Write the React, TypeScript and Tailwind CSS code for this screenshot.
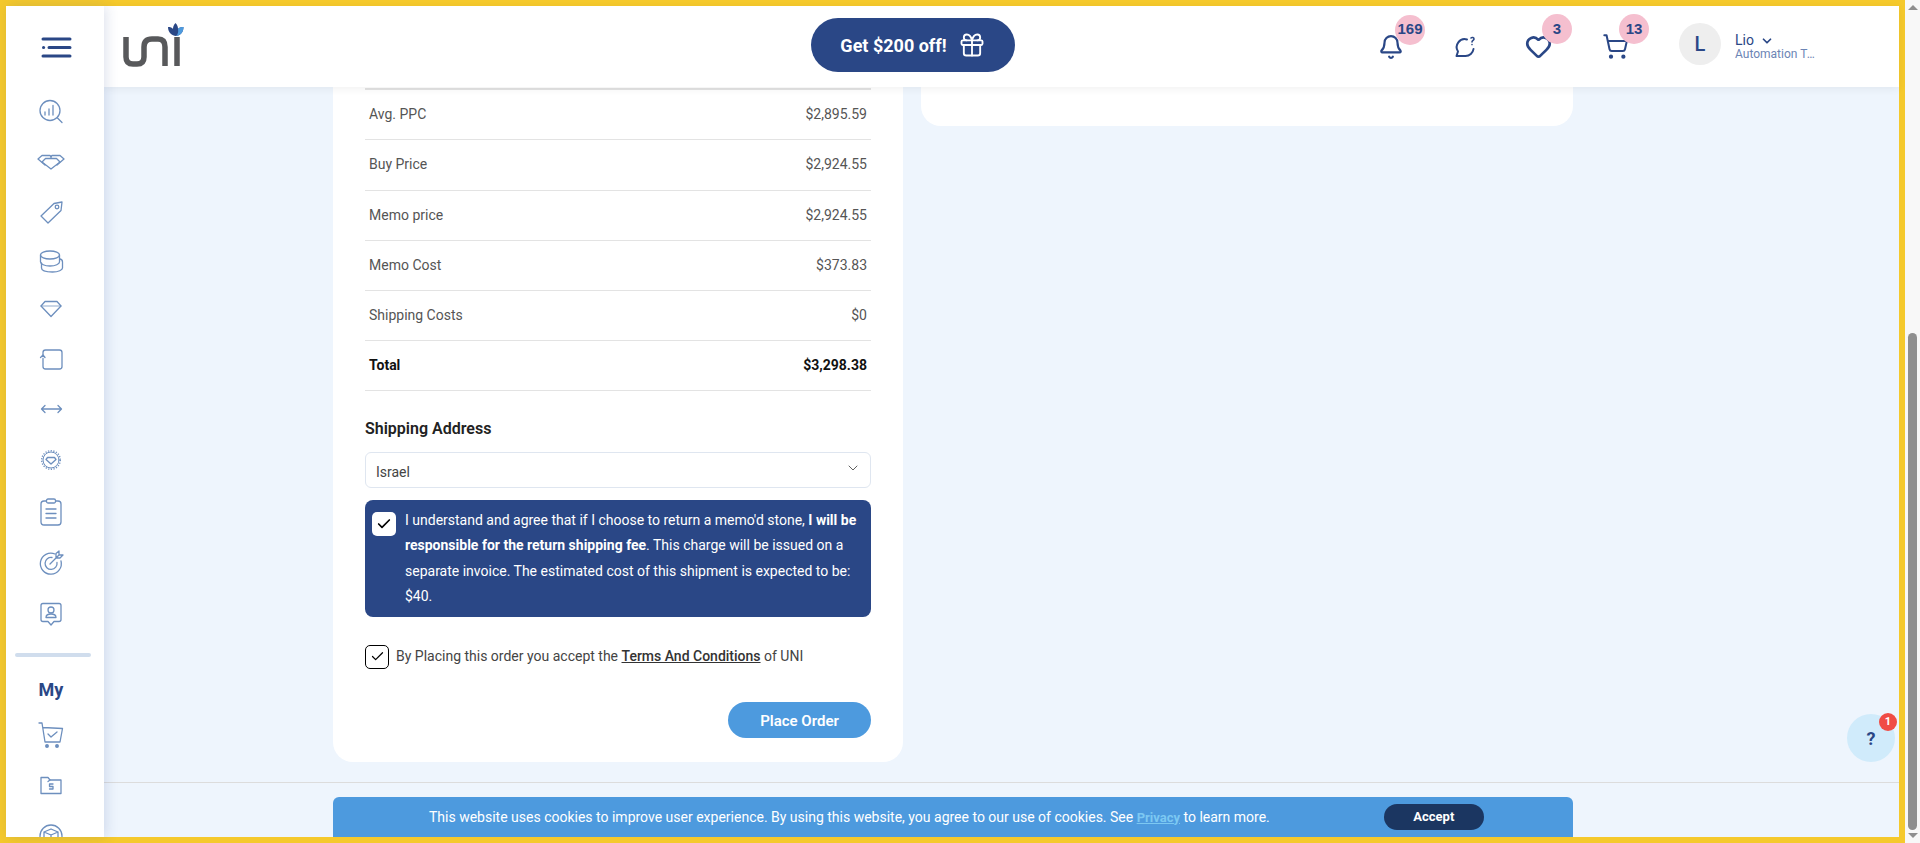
import { ReactNode } from "react";
import { Bell, ChevronDown, Gift, Heart, ShoppingCart, Check } from "lucide-react";

const rows = [
  { label: "Avg. PPC", value: "$2,895.59" },
  { label: "Buy Price", value: "$2,924.55" },
  { label: "Memo price", value: "$2,924.55" },
  { label: "Memo Cost", value: "$373.83" },
  { label: "Shipping Costs", value: "$0" },
];

// sidebar glyphs, all on a 32 box
const navIcons: ReactNode[] = [
  <>
    <circle cx="15" cy="14.500" r="10" />
    <path d="M22.500 22 27 26.500M10 19v-3M14 19v-6M18 19V9.500" />
  </>,
  <>
    <path d="M3 13 7 9.500h8l1.500 1.500M3 13l7 6" />
    <path d="M29 13l-4-3.500h-8L15.500 11M29 13l-7 6" />
    <path d="M10.500 12.500h11L25 16l-9 7-9-7z" />
  </>,
  <>
    <path d="M6 20 19 7.500 27 6l-1 8.500L13 27z" />
    <circle cx="22" cy="11" r="1.800" />
  </>,
  <>
    <ellipse cx="15" cy="9" rx="9.500" ry="4" />
    <path d="M5.500 9v7c0 2 4 4 9.500 4s9.500-2 9.500-4V9" />
    <path d="M25 13c2 .5 2.500 1.500 2.500 3v6c0 2-4 4-10 4s-11-1-11-4v-5" />
  </>,
  <g transform="translate(0,-3.500)">
    <path d="M10 9h12l4 4.500L16 24 6 13.500z" />
    <path d="M6 13.500h20" strokeOpacity="0.5" />
  </g>,
  <g transform="translate(0,-2.500)">
    <path d="M8 13V9a2.500 2.500 0 0 1 2.500-2.500h14A2.500 2.500 0 0 1 27 9v14a2.500 2.500 0 0 1-2.500 2.500h-14A2.500 2.500 0 0 1 8 23v-8" />
    <path d="m5.500 14 2.500-2.500 2 2.500" />
  </g>,
  <path transform="translate(0,-3)" d="M7 16h19M10 12.500 6.500 16l3.500 3.500M23 12.500l3.500 3.500-3.500 3.500" />,
  <g transform="translate(0,-2)">
    <circle cx="16" cy="16" r="8" strokeWidth="1" />
    <circle cx="16" cy="16" r="9.300" strokeDasharray="1.200 1.500" strokeWidth="1.400" strokeLinecap="butt" />
    <path d="M12.500 13.500h7l1.500 2-5 4.500-5-4.500z" />
  </g>,
  <>
    <rect x="6" y="5" width="20" height="24" rx="3" />
    <rect x="11.500" y="3" width="9" height="4" rx="1.500" fill="#fff" />
    <path d="M11 13h10M11 17.500h10M11 22h10" />
  </>,
  <g transform="translate(0,1)">
    <path d="M20 7a10.500 10.500 0 1 0 6 7" />
    <path d="M17 10.500a6 6 0 1 0 5 5" />
    <path d="m15 17 9-9M21 11V6.500L24 4v4h4l-3 3z" />
  </g>,
  <g transform="translate(0,2)">
    <path d="M8 5.500h16a2 2 0 0 1 2 2v14a2 2 0 0 1-2 2h-5L16 27l-3-3.500H8a2 2 0 0 1-2-2v-14a2 2 0 0 1 2-2z" />
    <circle cx="16" cy="12" r="3" />
    <path d="M11 19.500c0-2.500 2-3.500 5-3.500s5 1 5 3.500z" />
  </g>,
];

const myIcons: ReactNode[] = [
  <>
    <path d="M4 4h3l3 19h15l2.500-13.500L8 8.500" />
    <path d="m13 15 3 3 6-5" />
    <circle cx="12" cy="27" r="1.300" fill="#6d8fbe" />
    <circle cx="22" cy="27" r="1.300" fill="#6d8fbe" />
  </>,
  <>
    <path d="M6 8.500h7l2 2.500h11v13.500H6z" />
    <path d="M13 12.500 15 11" />
    <path d="M18 15h-3.500v2.500H18V20h-3.500" />
  </>,
  <>
    <circle cx="16" cy="17" r="11" />
    <path d="m9 13 7-3 7 3v8l-7 3-7-3zM9 13l7 3 7-3M16 16v8" />
  </>,
];

function NavIcon({ children }: { children: ReactNode }) {
  return (
    <div className="flex h-[50px] items-center justify-center">
      <svg width="32" height="32" viewBox="0 0 32 32" fill="none" stroke="#6d8fbe" strokeWidth="1.300" strokeLinecap="round" strokeLinejoin="round">
        {children}
      </svg>
    </div>
  );
}

function Sidebar() {
  return (
    <aside className="relative z-20 w-[98px] shrink-0 overflow-hidden bg-white shadow-[2px_0_12px_rgba(42,71,134,0.16)]">
      <div className="flex h-[81px] items-center justify-center pl-[4px]">
        <svg width="32" height="22" viewBox="0 0 32 22" fill="none" stroke="#2a4786" strokeWidth="3" strokeLinecap="round">
          <path d="M2 3h27M8 11.500h21M2 20h27" />
          <path d="M2.500 11.500h.1" />
        </svg>
      </div>
      <div className="w-[90px]">
        {navIcons.map((icon, i) => (
          <NavIcon key={i}>{icon}</NavIcon>
        ))}
      </div>
      <div className="ml-[9px] mt-[16px] h-[4px] w-[76px] rounded-full bg-[#d0dded]" />
      <div className="mt-[21px] w-[90px] text-center text-[18px] font-bold leading-[24px] text-[#2a4786]">My</div>
      <div className="mt-[8px] w-[90px]">
        {myIcons.map((icon, i) => (
          <NavIcon key={i}>{icon}</NavIcon>
        ))}
      </div>
    </aside>
  );
}

function Logo() {
  return (
    <svg width="68" height="48" viewBox="0 0 68 48" fill="none" className="shrink-0">
      <path d="M6 15v20q0 7 7 7h4q7 0 7-7V25q0-8 8-8h6q7 0 7 8v19" stroke="#58595b" strokeWidth="5.500" />
      <path d="M57 15v29" stroke="#58595b" strokeWidth="5.500" />
      <path d="M48 5c2.500 0 4 .5 5 2 0-2 .5-4 2.500-6 2 2 2.500 4 2.500 6 1-1.500 3-2 5.500-2 0 5.500-3.500 9-7.500 9S48 10.500 48 5z" fill="#2a4786" />
      <path d="M58 7c1-1.500 3-2 5.500-2 0 5.500-3.500 9-7.500 9 2-1.500 2.500-4 2-7z" fill="#4d9ade" />
    </svg>
  );
}

function CountBadge({ value }: { value: string }) {
  return (
    <span className="absolute left-[17px] top-[-19px] flex h-[30px] w-[30px] items-center justify-center rounded-full bg-[#f5bfcf] [font-family:'Liberation_Sans',sans-serif] text-[15px] font-bold text-[#2a4786]">
      {value}
    </span>
  );
}

function Header() {
  return (
    <header className="relative z-10 flex h-[81px] shrink-0 items-start bg-white shadow-[0_2px_8px_rgba(0,0,0,0.06)]">
      <div className="ml-[16px] mt-[16px]">
        <Logo />
      </div>
      <button className="ml-[623px] mt-[12px] flex h-[54px] w-[204px] items-center justify-center gap-[11px] rounded-full bg-[#2a4786] text-[18px] font-bold text-white">
        Get $200 off!
        <Gift size={28} strokeWidth={1.600} />
      </button>
      <div className="ml-[363px] flex h-[81px] items-center text-[#2a4786]">
        <div className="relative">
          <Bell size={26} strokeWidth={2} />
          <CountBadge value="169" />
        </div>
        <div className="ml-[49px]">
          <svg width="24" height="24" viewBox="0 0 24 24" fill="none" stroke="currentColor" strokeWidth="2" strokeLinecap="round" strokeLinejoin="round">
            <path d="M14 4.500A8 8 0 0 0 5 16.500L3.500 21h9a8 8 0 0 0 8-7" />
            <path d="M18 3c1-1 3-.5 3 1 0 1.300-2 1.500-2 3M19 9.500v.1" strokeWidth="1.600" />
          </svg>
        </div>
        <div className="relative ml-[48px]">
          <Heart size={27} strokeWidth={2.400} />
          <CountBadge value="3" />
        </div>
        <div className="relative ml-[50px]">
          <ShoppingCart size={27} strokeWidth={1.800} />
          <CountBadge value="13" />
        </div>
        <div className="ml-[50px] mt-[-5px] flex h-[42px] w-[42px] items-center justify-center rounded-full bg-[#eeeeee] text-[20px] font-medium">L</div>
        <div className="ml-[14px] w-[84px]">
          <div className="flex items-center gap-[6px] text-[14px] leading-[16px]">
            Lio
            <ChevronDown size={14} strokeWidth={3} className="mt-[2px]" />
          </div>
          <div className="truncate text-[12px] leading-[13px] text-[#6c85b5]">Automation Testing</div>
        </div>
      </div>
    </header>
  );
}

function OrderCard() {
  return (
    <section className="h-[675px] w-[570px] shrink-0 rounded-b-[20px] bg-white pl-[32px] pr-[32px] pt-[1px]">
      <div className="border-t-2 border-[#e3e3e3]">
        {rows.map((row) => (
          <div key={row.label} className="flex h-[50.300px] items-center justify-between border-b border-[#e3e3e3] px-[4px] text-[14px] text-[#555555]">
            <span>{row.label}</span>
            <span>{row.value}</span>
          </div>
        ))}
        <div className="flex h-[49.500px] items-center justify-between border-b border-[#e3e3e3] px-[4px] text-[14px] font-bold text-[#111111]">
          <span>Total</span>
          <span>$3,298.38</span>
        </div>
      </div>
      <h3 className="mt-[28px] text-[16px] font-semibold leading-[20px] text-[#222222]">Shipping Address</h3>
      <div className="mt-[13px] flex h-[36px] items-center justify-between rounded-[6px] border border-[#dfe6f0] pl-[10px] pr-[9px] text-[14px] text-[#444444]">
        <span className="mt-[5px]">Israel</span>
        <ChevronDown size={16} strokeWidth={1.400} className="mt-[-4px] text-[#555555]" />
      </div>
      <div className="mt-[12px] flex h-[117px] rounded-[8px] bg-[#2a4786] pl-[7px] pr-[8px] pt-[8px] text-[14px] leading-[25.500px] text-white">
        <span className="mr-[9px] mt-[4px] flex h-[24px] w-[24px] shrink-0 items-center justify-center rounded-[5px] bg-white">
          <Check size={16} strokeWidth={2.500} className="text-black" />
        </span>
        <p>
          I understand and agree that if I choose to return a memo'd stone, <b className="font-bold">I will be responsible for the return shipping fee</b>. This charge will be issued on a separate invoice. The estimated cost of this shipment is expected to be: $40.
        </p>
      </div>
      <div className="mt-[28px] flex items-center text-[14px] text-[#444444]">
        <span className="mr-[7px] flex h-[24px] w-[24px] shrink-0 items-center justify-center rounded-[5px] border border-black bg-white">
          <Check size={15} strokeWidth={2} className="text-black" />
        </span>
        <span>
          By Placing this order you accept the <a className="font-medium text-[#333333] underline">Terms And Conditions</a> of UNI
        </span>
      </div>
      <div className="mt-[33px] flex justify-end">
        <button className="h-[36px] w-[143px] rounded-full bg-[#4d9ade] pt-[2px] text-[15px] font-semibold text-white">Place Order</button>
      </div>
    </section>
  );
}

function CookieBar() {
  return (
    <div className="ml-[229px] flex h-[40px] w-[1240px] items-center rounded-t-[6px] bg-[#4d9ade] pl-[96px] text-[14px] text-white">
      <span>
        This website uses cookies to improve user experience. By using this website, you agree to our use of cookies. See <a className="text-[13px] font-bold text-[#7cc8f2] underline">Privacy</a> to learn more.
      </span>
      <button className="ml-[114px] h-[26px] w-[100px] rounded-full bg-[#1b3661] text-[13px] font-bold text-white">Accept</button>
    </div>
  );
}

function Scrollbar() {
  return (
    <div className="flex w-[15px] shrink-0 flex-col items-center bg-[#f8f8f8]">
      <span className="mt-[5px] h-0 w-0 border-x-[5px] border-b-[5px] border-x-transparent border-b-[#8f8f8f]" />
      <span className="mt-[323px] h-[497px] w-[9px] rounded-full bg-[#8f8f8f]" />
      <span className="mt-[3px] h-0 w-0 border-x-[5px] border-t-[5px] border-x-transparent border-t-[#8f8f8f]" />
    </div>
  );
}

export default function App() {
  return (
    <div className="flex h-screen overflow-hidden [font-family:Roboto,sans-serif]">
      <div className="relative flex min-w-0 flex-1 border-[6px] border-[#f5c92c] bg-[#eef5fd]">
        <Sidebar />
        <div className="flex min-w-0 flex-1 flex-col">
          <Header />
          <main className="flex-1 overflow-hidden">
            <div className="ml-[229px] flex gap-[18px]">
              <OrderCard />
              <div className="h-[39px] w-[652px] rounded-b-[20px] bg-white" />
            </div>
            <div className="mt-[20px] border-t border-[#dcdcdc] pt-[14px]">
              <CookieBar />
            </div>
          </main>
        </div>
        {/* help bubble floats above the page */}
        <div className="absolute right-[4px] top-[708px] flex h-[48px] w-[48px] items-center justify-center rounded-full bg-[#d0ebfb] text-[18px] font-bold text-[#2a4786]">
          ?
          <span className="absolute right-[-2px] top-[-1px] flex h-[18px] w-[18px] items-center justify-center rounded-full bg-[#f04c45] text-[11px] font-bold text-white">1</span>
        </div>
      </div>
      <Scrollbar />
    </div>
  );
}
